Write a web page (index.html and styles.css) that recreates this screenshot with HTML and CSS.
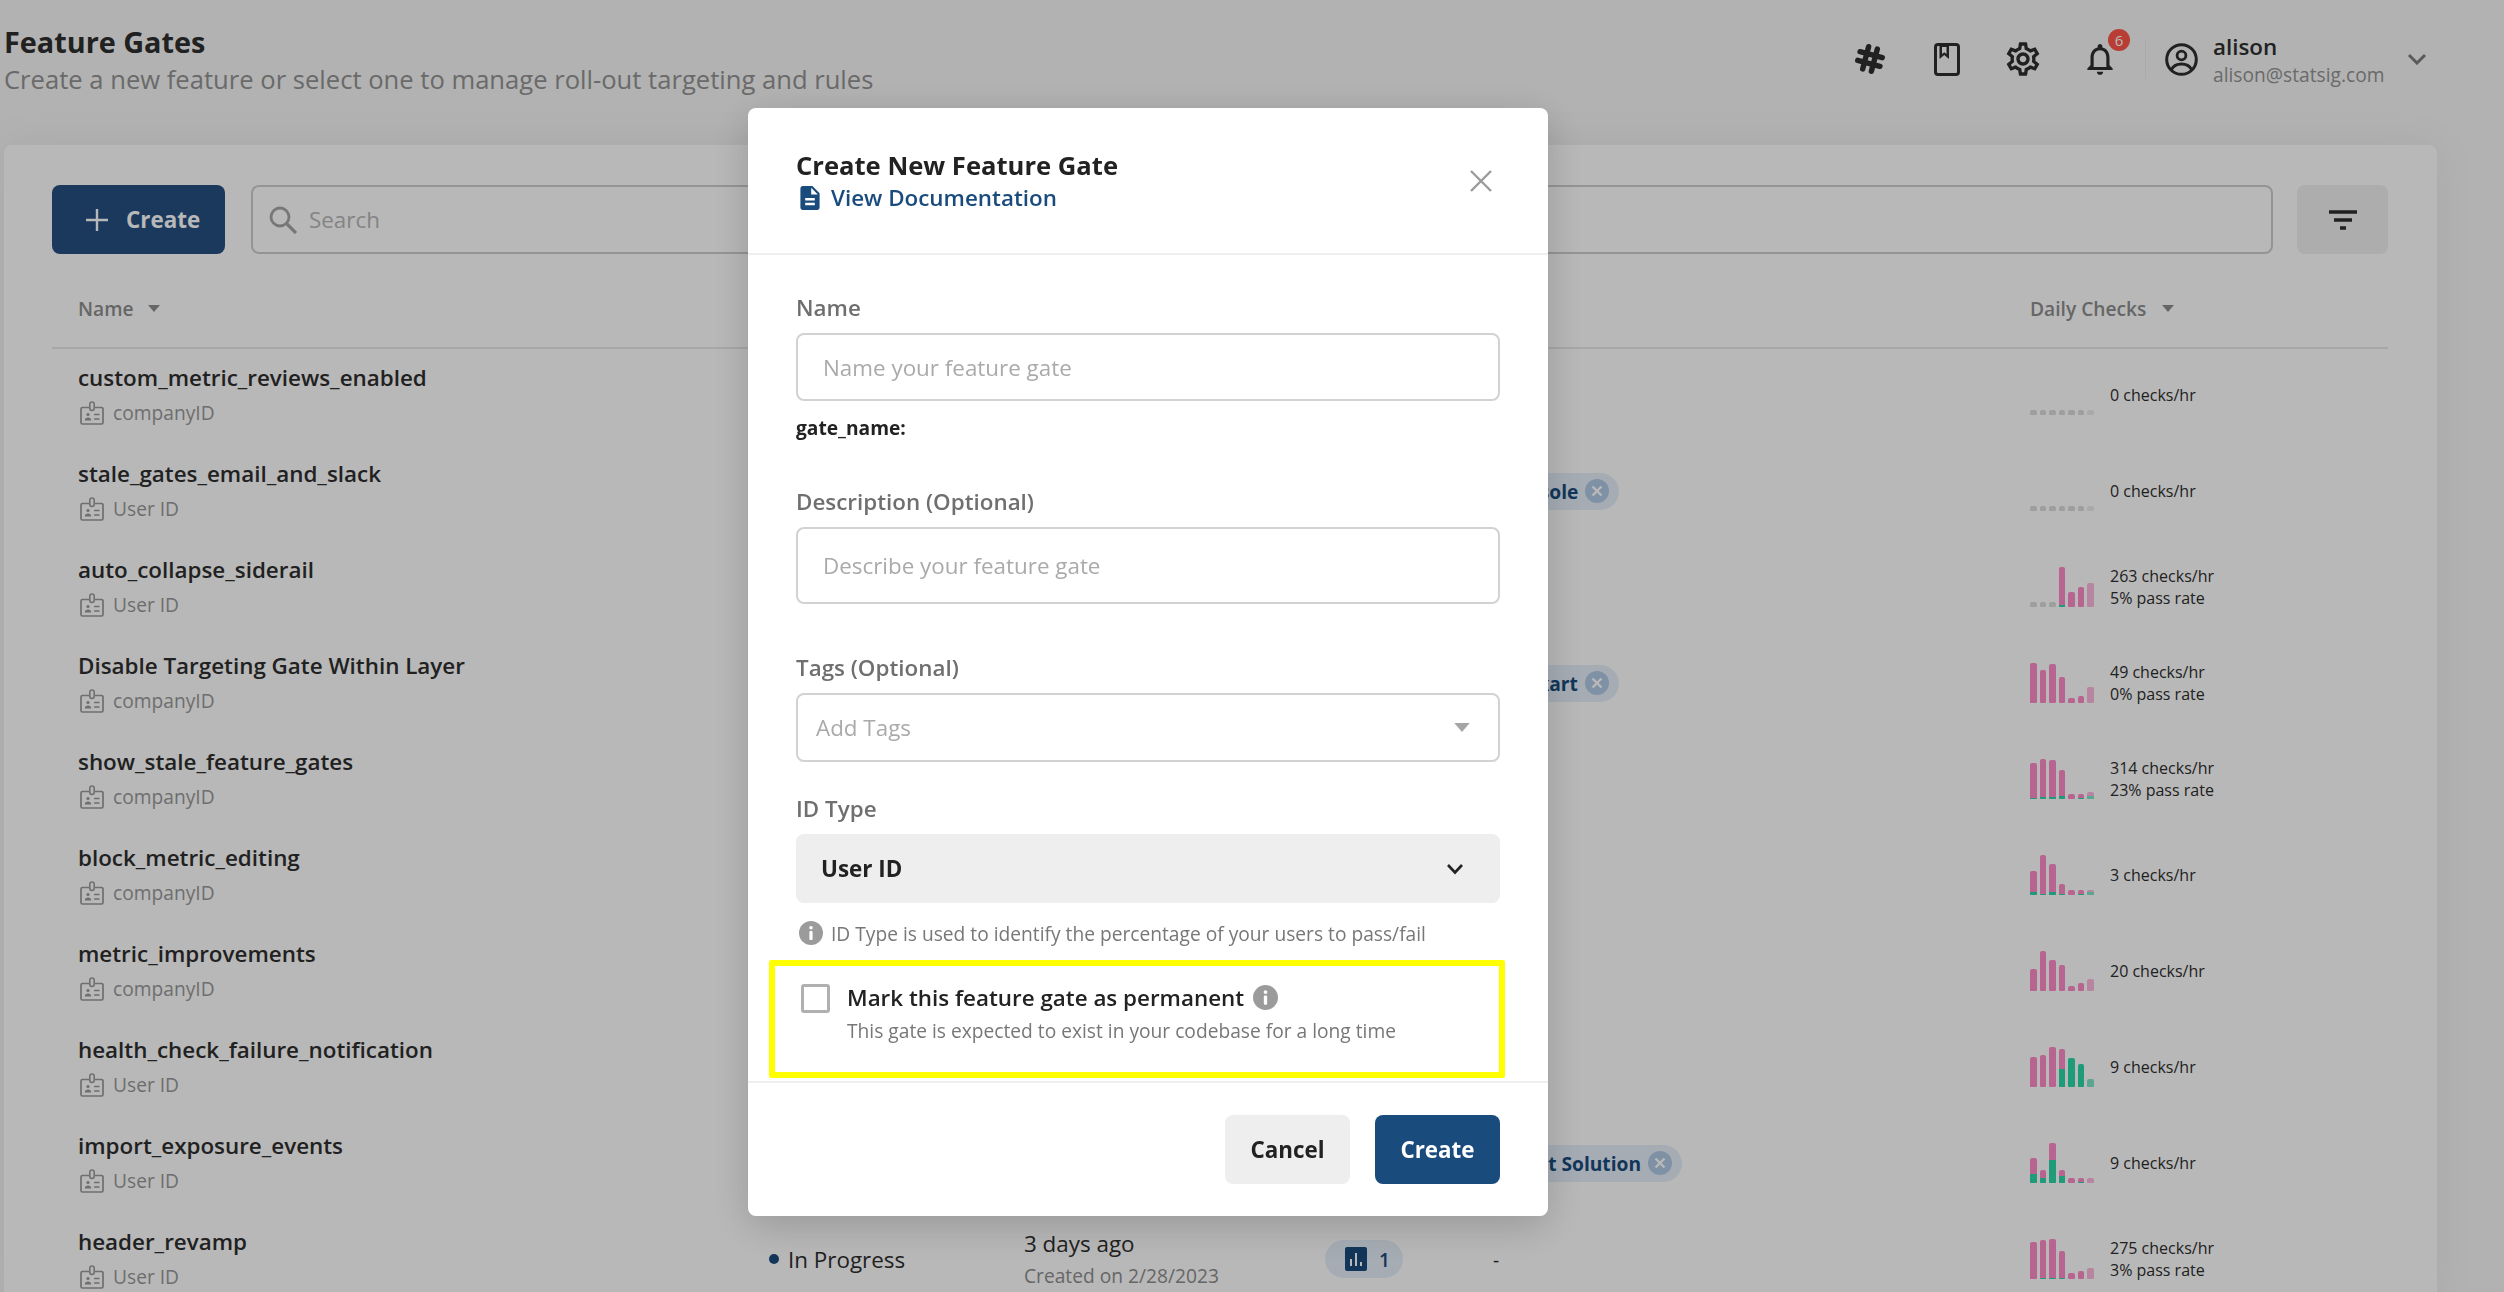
FILE: index.html
```html
<!DOCTYPE html>
<html lang="en">
<head>
<meta charset="utf-8">
<title>Feature Gates</title>
<link rel="stylesheet" href="styles.css">
</head>
<body>
<svg class="defs" width="0" height="0" aria-hidden="true">
  <symbol id="badge" viewBox="0 0 24 24">
    <path d="M9.5 6.5H2.6a1.6 1.6 0 0 0-1.6 1.6v13.3A1.6 1.6 0 0 0 2.6 23h18.8a1.6 1.6 0 0 0 1.6-1.6V8.100a1.600 1.600 0 0 0-1.600-1.600h-6.900" fill="none" stroke="currentColor" stroke-width="1.700"/>
    <rect x="9.800" y="1" width="4.400" height="8.500" rx="2.200" fill="none" stroke="currentColor" stroke-width="1.600"/>
    <circle cx="8" cy="13.500" r="1.600" fill="currentColor"/>
    <path d="M4.800 19.500c0-2.200 1.400-3 3.200-3s3.200.8 3.200 3z" fill="currentColor"/>
    <path d="M14 13.500h5.500M14 18h5.500" stroke="currentColor" stroke-width="1.600"/>
  </symbol>
  <symbol id="caret" viewBox="0 0 12 7"><path d="M0 0h12L6 7z" fill="currentColor"/></symbol>
  <symbol id="info" viewBox="0 0 24 24">
    <circle cx="12" cy="12" r="12" fill="currentColor"/>
    <circle cx="12" cy="6.800" r="1.800" fill="#fff"/>
    <rect x="10.400" y="10" width="3.200" height="9" rx="1" fill="#fff"/>
  </symbol>
  <symbol id="clear" viewBox="0 0 24 24">
    <circle cx="12" cy="12" r="12" fill="#b0c9e5"/>
    <path d="M7.500 7.500l9 9M16.500 7.500l-9 9" stroke="#fff" stroke-width="2.400"/>
  </symbol>
</svg>

<div class="page">
  <header class="topbar">
    <div class="heading">
      <h1 class="title">Feature Gates</h1>
      <p class="subtitle">Create a new feature or select one to manage roll-out targeting and rules</p>
    </div>
    <div class="account">
      <svg class="icon-slack" viewBox="0 0 32 32"><g transform="rotate(15 16 16)" stroke="#2e2e2e" stroke-width="5.400" stroke-linecap="round"><path d="M11.500 4.500v23M20.500 4.500v23M4.500 11.500h23M4.500 20.500h23"/></g></svg>
      <svg class="icon-book" viewBox="0 0 26 33"><rect x="1.500" y="1.500" width="23" height="30" rx="2.500" fill="none" stroke="#2e2e2e" stroke-width="3"/><path d="M5.500 2.500h9.500v13.500l-4.750-4-4.750 4z" fill="#2e2e2e"/><path d="M8 4h4.500v7l-2.250-1.800L8 11z" fill="#fff"/></svg>
      <svg class="icon-gear" viewBox="0 0 24 24"><path fill="#2e2e2e" d="M19.430 12.980c.04-.32.07-.64.07-.98 0-.34-.03-.66-.07-.98l2.110-1.650c.19-.15.24-.42.12-.64l-2-3.460c-.09-.16-.26-.25-.44-.25-.06 0-.12.01-.17.03l-2.490 1c-.52-.4-1.080-.73-1.690-.98l-.38-2.650C14.460 2.180 14.250 2 14 2h-4c-.25 0-.46.18-.49.42l-.38 2.650c-.61.25-1.170.59-1.690.98l-2.490-1c-.06-.02-.12-.03-.18-.03-.17 0-.34.09-.43.25l-2 3.460c-.13.22-.07.49.12.64l2.110 1.650c-.04.32-.07.65-.07.98 0 .33.03.66.07.98l-2.110 1.650c-.19.15-.24.42-.12.64l2 3.460c.09.16.26.25.44.25.06 0 .12-.01.17-.03l2.490-1c.52.4 1.080.73 1.690.98l.38 2.650c.03.24.24.42.49.42h4c.25 0 .46-.18.49-.42l.38-2.650c.61-.25 1.170-.59 1.690-.98l2.490 1c.06.02.12.03.18.03.17 0 .34-.09.43-.25l2-3.460c.12-.22.07-.49-.12-.64l-2.110-1.650zm-1.980-1.710c.04.31.05.52.05.73 0 .21-.02.43-.05.73l-.14 1.130.89.7 1.080.84-.7 1.210-1.270-.51-1.040-.42-.9.68c-.43.32-.84.56-1.250.73l-1.060.43-.16 1.130-.2 1.350h-1.400l-.19-1.350-.16-1.130-1.060-.43c-.43-.18-.83-.41-1.230-.71l-.91-.7-1.060.43-1.270.51-.7-1.210 1.080-.84.89-.7-.14-1.130c-.03-.31-.05-.54-.05-.74s.02-.43.05-.73l.14-1.130-.89-.7-1.080-.84.7-1.210 1.270.51 1.040.42.9-.68c.43-.32.84-.56 1.250-.73l1.060-.43.16-1.130.2-1.350h1.390l.19 1.350.16 1.130 1.060.43c.43.18.83.41 1.230.71l.91.7 1.060-.43 1.270-.51.7 1.210-1.070.85-.89.7.14 1.130zM12 8c-2.210 0-4 1.790-4 4s1.790 4 4 4 4-1.790 4-4-1.790-4-4-4zm0 6c-1.100 0-2-.9-2-2s.9-2 2-2 2 .9 2 2-.9 2-2 2z"/></svg>
      <div class="bell">
        <svg class="icon-bell" viewBox="0 0 24 24"><path fill="#2e2e2e" d="M12 22c1.100 0 2-.9 2-2h-4c0 1.100.9 2 2 2zm6-6v-5c0-3.070-1.630-5.640-4.500-6.320V4c0-.83-.67-1.500-1.500-1.500s-1.500.67-1.500 1.500v.68C7.640 5.360 6 7.920 6 11v5l-2 2v1h16v-1l-2-2zm-2 1H8v-6c0-2.480 1.510-4.500 4-4.500s4 2.020 4 4.500v6z"/></svg>
        <span class="badge">6</span>
      </div>
      <span class="sep"></span>
      <svg class="icon-user" viewBox="0 0 33 33"><circle cx="16.500" cy="16.500" r="14.800" fill="none" stroke="#2e2e2e" stroke-width="3"/><circle cx="16.500" cy="12.500" r="4.400" fill="none" stroke="#2e2e2e" stroke-width="2.800"/><path d="M6.500 26.500c2-4 6-5.500 10-5.500s8 1.500 10 5.500" fill="none" stroke="#2e2e2e" stroke-width="2.800"/></svg>
      <div class="who">
        <div class="who-name">alison</div>
        <div class="who-mail">alison@statsig.com</div>
      </div>
      <svg class="icon-chev" viewBox="0 0 20 12"><path d="M2 2l8 8 8-8" fill="none" stroke="#7d7d7d" stroke-width="3"/></svg>
    </div>
  </header>

  <main class="panel">
    <div class="toolbar">
      <button class="btn-new" type="button"><svg class="icon-plus" viewBox="0 0 22 22"><path d="M11 0v22M0 11h22" stroke="#fff" stroke-width="2.400"/></svg>Create</button>
      <div class="search">
        <svg class="icon-search" viewBox="0 0 28 28"><circle cx="11" cy="11" r="9" fill="none" stroke="#a6a6a6" stroke-width="2.800"/><path d="M17.500 17.500L27 27" stroke="#a6a6a6" stroke-width="3.200"/></svg>
        <span class="search-text">Search</span>
      </div>
      <button class="btn-filter" type="button" aria-label="Filter"><svg class="icon-filter" viewBox="0 0 28 20"><path d="M0 2h28M5 10h18M11 18h6" stroke="#2e2e2e" stroke-width="3.400"/></svg></button>
    </div>

    <div class="row head">
      <div class="th name-col">Name <svg class="caret"><use href="#caret"/></svg></div>
      <div class="th checks-col">Daily Checks <svg class="caret"><use href="#caret"/></svg></div>
    </div>

    <div class="row">
      <div class="name-col"><div class="gate">custom_metric_reviews_enabled</div><div class="idtype"><svg class="icon-badge"><use href="#badge"/></svg>companyID</div></div>
      <div class="checks-col"><div class="bars"><span class="bar idle"></span><span class="bar idle"></span><span class="bar idle"></span><span class="bar idle"></span><span class="bar idle"></span><span class="bar idle"></span><span class="bar idle"></span></div><div class="stats">0 checks/hr</div></div>
    </div>

    <div class="row">
      <div class="name-col"><div class="gate">stale_gates_email_and_slack</div><div class="idtype"><svg class="icon-badge"><use href="#badge"/></svg>User ID</div></div>
      <div class="tags-col"><span class="chip">Console<svg class="icon-clear"><use href="#clear"/></svg></span></div>
      <div class="checks-col"><div class="bars"><span class="bar idle"></span><span class="bar idle"></span><span class="bar idle"></span><span class="bar idle"></span><span class="bar idle"></span><span class="bar idle"></span><span class="bar idle"></span></div><div class="stats">0 checks/hr</div></div>
    </div>

    <div class="row">
      <div class="name-col"><div class="gate">auto_collapse_siderail</div><div class="idtype"><svg class="icon-badge"><use href="#badge"/></svg>User ID</div></div>
      <div class="checks-col"><div class="bars"><span class="bar idle"></span><span class="bar idle"></span><span class="bar idle"></span><span class="bar" style="height:40px"><i style="height:2px"></i></span><span class="bar" style="height:15px"></span><span class="bar" style="height:20px"></span><span class="bar" style="height:24px"></span></div><div class="stats">263 checks/hr<br>5% pass rate</div></div>
    </div>

    <div class="row">
      <div class="name-col"><div class="gate">Disable Targeting Gate Within Layer</div><div class="idtype"><svg class="icon-badge"><use href="#badge"/></svg>companyID</div></div>
      <div class="tags-col"><span class="chip">Flipkart<svg class="icon-clear"><use href="#clear"/></svg></span></div>
      <div class="checks-col"><div class="bars"><span class="bar" style="height:40px"></span><span class="bar" style="height:33px"></span><span class="bar" style="height:39px"></span><span class="bar" style="height:26px"></span><span class="bar" style="height:5px"></span><span class="bar" style="height:7px"></span><span class="bar" style="height:16px"></span></div><div class="stats">49 checks/hr<br>0% pass rate</div></div>
    </div>

    <div class="row">
      <div class="name-col"><div class="gate">show_stale_feature_gates</div><div class="idtype"><svg class="icon-badge"><use href="#badge"/></svg>companyID</div></div>
      <div class="checks-col"><div class="bars"><span class="bar" style="height:36px"><i style="height:1px"></i></span><span class="bar" style="height:40px"><i style="height:2px"></i></span><span class="bar" style="height:39px"><i style="height:2px"></i></span><span class="bar" style="height:29px"><i style="height:3px"></i></span><span class="bar" style="height:5px"></span><span class="bar" style="height:5px"><i style="height:1px"></i></span><span class="bar" style="height:7px"><i style="height:3px"></i></span></div><div class="stats">314 checks/hr<br>23% pass rate</div></div>
    </div>

    <div class="row">
      <div class="name-col"><div class="gate">block_metric_editing</div><div class="idtype"><svg class="icon-badge"><use href="#badge"/></svg>companyID</div></div>
      <div class="checks-col"><div class="bars"><span class="bar" style="height:24px"><i style="height:3px"></i></span><span class="bar" style="height:40px"><i style="height:1px"></i></span><span class="bar" style="height:31px"><i style="height:3px"></i></span><span class="bar" style="height:11px"><i style="height:1px"></i></span><span class="bar" style="height:5px"></span><span class="bar" style="height:5px"><i style="height:1px"></i></span><span class="bar" style="height:5px"><i style="height:3px"></i></span></div><div class="stats">3 checks/hr</div></div>
    </div>

    <div class="row">
      <div class="name-col"><div class="gate">metric_improvements</div><div class="idtype"><svg class="icon-badge"><use href="#badge"/></svg>companyID</div></div>
      <div class="checks-col"><div class="bars"><span class="bar" style="height:22px"></span><span class="bar" style="height:40px"></span><span class="bar" style="height:31px"></span><span class="bar" style="height:26px"></span><span class="bar" style="height:5px"></span><span class="bar" style="height:8px"></span><span class="bar" style="height:12px"></span></div><div class="stats">20 checks/hr</div></div>
    </div>

    <div class="row">
      <div class="name-col"><div class="gate">health_check_failure_notification</div><div class="idtype"><svg class="icon-badge"><use href="#badge"/></svg>User ID</div></div>
      <div class="checks-col"><div class="bars"><span class="bar" style="height:30px"></span><span class="bar" style="height:32px"></span><span class="bar" style="height:40px"></span><span class="bar" style="height:38px"><i style="height:18px"></i></span><span class="bar" style="height:29px"><i style="height:29px"></i></span><span class="bar" style="height:23px"><i style="height:23px"></i></span><span class="bar" style="height:8px"><i style="height:8px"></i></span></div><div class="stats">9 checks/hr</div></div>
    </div>

    <div class="row">
      <div class="name-col"><div class="gate">import_exposure_events</div><div class="idtype"><svg class="icon-badge"><use href="#badge"/></svg>User ID</div></div>
      <div class="tags-col"><span class="chip">Chart Solution<svg class="icon-clear"><use href="#clear"/></svg></span></div>
      <div class="checks-col"><div class="bars"><span class="bar" style="height:25px"><i style="height:9px"></i></span><span class="bar" style="height:13px"><i style="height:5px"></i></span><span class="bar" style="height:40px"><i style="height:23px"></i></span><span class="bar" style="height:13px"><i style="height:7px"></i></span><span class="bar" style="height:5px"></span><span class="bar" style="height:5px"><i style="height:1px"></i></span><span class="bar" style="height:5px"></span></div><div class="stats">9 checks/hr</div></div>
    </div>

    <div class="row">
      <div class="name-col"><div class="gate">header_revamp</div><div class="idtype"><svg class="icon-badge"><use href="#badge"/></svg>User ID</div></div>
      <div class="status-col"><span class="dot"></span>In Progress</div>
      <div class="date-col"><div class="date">3 days ago</div><div class="created">Created on 2/28/2023</div></div>
      <div class="metric-col"><span class="metric-chip"><svg class="icon-metric" viewBox="0 0 22 24"><rect width="22" height="24" rx="2" fill="#194b7d"/><path d="M6 12v7M11 6v13M16 15v4" stroke="#fff" stroke-width="2"/></svg>1</span></div>
      <div class="tags-col plain">-</div>
      <div class="checks-col"><div class="bars"><span class="bar" style="height:37px"></span><span class="bar" style="height:39px"><i style="height:1px"></i></span><span class="bar" style="height:40px"><i style="height:1px"></i></span><span class="bar" style="height:28px"><i style="height:1px"></i></span><span class="bar" style="height:6px"></span><span class="bar" style="height:8px"></span><span class="bar" style="height:11px"></span></div><div class="stats">275 checks/hr<br>3% pass rate</div></div>
    </div>
  </main>
</div>

<div class="overlay">
  <section class="modal">
    <div class="modal-head">
      <div>
        <h2 class="modal-title">Create New Feature Gate</h2>
        <a class="doc-link" href="#"><svg class="icon-doc" viewBox="4 2 16 20"><path fill="#194b7d" d="M14 2H6c-1.100 0-1.990.9-1.990 2L4 20c0 1.100.89 2 1.990 2H18c1.100 0 2-.9 2-2V8l-6-6zm2 16H8v-2h8v2zm0-4H8v-2h8v2zm-3-5V3.500L18.500 9H13z"/></svg>View Documentation</a>
      </div>
      <svg class="icon-close" viewBox="0 0 22 22"><path d="M1 1l20 20M21 1L1 21" stroke="#9b9b9b" stroke-width="2.400"/></svg>
    </div>
    <div class="modal-body">
      <label class="label">Name</label>
      <div class="field field-name">Name your feature gate</div>
      <div class="slug">gate_name:</div>
      <label class="label label-desc">Description (Optional)</label>
      <div class="field field-desc">Describe your feature gate</div>
      <label class="label label-tags">Tags (Optional)</label>
      <div class="field field-tags">Add Tags<svg class="caret caret-tags"><use href="#caret"/></svg></div>
      <label class="label label-id">ID Type</label>
      <div class="select">User ID<svg class="icon-select-chev" viewBox="0 0 18 12"><path d="M2 2l7 7.500L16 2" fill="none" stroke="#222" stroke-width="2.600"/></svg></div>
      <div class="hint"><svg class="icon-info"><use href="#info"/></svg>ID Type is used to identify the percentage of your users to pass/fail</div>
      <div class="permanent">
        <span class="checkbox"></span>
        <div>
          <div class="perm-title">Mark this feature gate as permanent<svg class="icon-info perm-info"><use href="#info"/></svg></div>
          <div class="perm-sub">This gate is expected to exist in your codebase for a long time</div>
        </div>
        <span class="highlight"></span>
      </div>
    </div>
    <div class="modal-foot">
      <button class="btn btn-cancel" type="button">Cancel</button>
      <button class="btn btn-create" type="button">Create</button>
    </div>
  </section>
</div>
</body>
</html>
```
FILE: styles.css
```css
* { box-sizing: border-box; }
html, body { margin: 0; height: 100%; }
body {
  background: #f7f7f7;
  color: #2e2e2e;
  font-family: "Open Sans", "Noto Sans", sans-serif;
  overflow: hidden;
}
.defs { position: absolute; }
svg { display: block; flex: none; }
button { font-family: inherit; border: 0; }

.page { height: 1292px; overflow: hidden; }

/* top bar */
.topbar { height: 145px; display: flex; justify-content: space-between; align-items: flex-start; padding-left: 4px; }
.title { margin: 24px 0 0; font-size: 28.8px; line-height: 36px; font-weight: 700; }
.subtitle { margin: 3px 0 0; font-size: 25.6px; line-height: 34px; font-weight: 400; color: #939393; }

.account { display: flex; align-items: center; height: 80px; margin-top: 19px; width: 650px; }
.icon-slack { width: 32px; height: 32px; }
.icon-book { width: 26px; height: 33px; margin-left: 48px; }
.icon-gear { width: 40px; height: 40px; margin-left: 43px; }
.bell { position: relative; width: 38px; height: 38px; margin-left: 38px; }
.icon-bell { width: 38px; height: 38px; }
.badge {
  position: absolute; left: 27px; top: -11px; width: 22px; height: 22px; border-radius: 50%;
  background: #ff5548; color: #fff; font-size: 15px; line-height: 22px; text-align: center;
}
.sep { width: 1px; height: 40px; background: #ececec; margin-left: 26px; }
.icon-user { width: 33px; height: 33px; margin-left: 19px; }
.who { margin: 3px 0 0 15px; }
.who-name { font-size: 22.4px; line-height: 28px; font-weight: 600; }
.who-mail { font-size: 19.2px; line-height: 28px; color: #939393; }
.icon-chev { width: 20px; height: 12px; margin-left: 23px; }

/* panel */
.panel {
  margin-left: 4px; width: 2433px; height: 1160px; background: #fff; border-radius: 8px;
  padding: 40px 49px 0 48px; box-shadow: 0 0 40px rgba(60, 70, 90, 0.08);
}
.toolbar { display: flex; height: 69px; }
.btn-new {
  width: 173px; height: 69px; background: #245082; color: #fff; border-radius: 8px;
  display: flex; align-items: center; gap: 18px; padding: 0 0 0 34px;
  font-size: 22.4px; font-weight: 700;
}
.icon-plus { width: 22px; height: 22px; }
.search {
  flex: 1; margin: 0 24px 0 26px; border: 2px solid #cecece; border-radius: 8px;
  display: flex; align-items: center; padding-left: 16px;
}
.icon-search { width: 28px; height: 28px; }
.search-text { margin-left: 12px; font-size: 22.4px; color: #b8b8b8; }
.btn-filter { width: 91px; height: 69px; background: #f0f0f0; border-radius: 8px; display: flex; align-items: center; justify-content: center; }
.icon-filter { width: 28px; height: 20px; }

/* table */
.row { height: 96px; position: relative; display: flex; align-items: center; }
.row.head { height: 95px; padding-top: 16px; margin-bottom: -2px; border-bottom: 2px solid #e8e8e8; }
.name-col { padding-left: 26px; padding-bottom: 1px; width: 715px; flex: none; }
.th { display: flex; align-items: center; gap: 14px; font-size: 19.2px; font-weight: 600; color: #8e8e8e; }
.head .name-col { padding-bottom: 0; }
.caret { width: 12px; height: 7px; }
.checks-col { position: absolute; left: 1978px; top: 0; bottom: 0; display: flex; align-items: center; }
.head .checks-col { top: 16px; gap: 16px; }
.gate { font-size: 22.4px; line-height: 30px; font-weight: 600; }
.idtype { display: flex; align-items: center; margin-top: 7px; font-size: 19.2px; line-height: 26px; color: #999; padding-left: 2px; }
.icon-badge { width: 24px; height: 24px; margin-right: 9px; color: #9a9a9a; }

.bars { display: flex; align-items: flex-end; gap: 3px; width: 64px; height: 40px; }
.bar {
  flex: 1; height: 5px; background: #ff8bc9; border-radius: 2px 2px 1px 1px; overflow: hidden;
  display: flex; align-items: flex-end;
}
.bar.idle { background: #dcdcdc; }
.bar:last-child { opacity: 0.6; }
.bar i { display: block; width: 100%; background: #2ad7a7; }
.stats { margin-left: 16px; font-size: 16px; line-height: 22px; color: #2e2e2e; }

.status-col { position: absolute; left: 717px; display: flex; align-items: center; font-size: 22.4px; }
.dot { width: 10px; height: 10px; border-radius: 50%; background: #194b7d; margin-right: 9px; }
.date-col { position: absolute; left: 972px; }
.date { font-size: 22.4px; line-height: 30px; }
.created { font-size: 19.2px; line-height: 26px; margin-top: 4px; color: #8e8e8e; }
.metric-col { position: absolute; left: 1273px; }
.metric-chip {
  width: 78px; height: 38px; border-radius: 19px; background: #e6effa; color: #194b7d;
  display: flex; align-items: center; gap: 12px; padding-left: 20px; font-size: 19.2px; font-weight: 600;
}
.icon-metric { width: 22px; height: 24px; }
.tags-col { position: absolute; left: 1435px; }
.tags-col.plain { left: 1441px; font-size: 19.2px; }
.chip {
  display: flex; align-items: center; height: 37px; border-radius: 19px; background: #e6effa;
  color: #194b7d; font-size: 19.2px; font-weight: 700; padding: 0 10px 0 16px;
}
.icon-clear { width: 24px; height: 24px; margin-left: 7px; }

/* modal */
.overlay { position: fixed; inset: 0; background: rgba(0, 0, 0, 0.28); padding: 108px 0 0 748px; }
.modal {
  width: 800px; height: 1108px; background: #fff; border-radius: 8px; display: flex; flex-direction: column;
  box-shadow: 0 10px 40px rgba(0, 0, 0, 0.18);
}
.modal-head {
  height: 147px; flex: none; border-bottom: 2px solid #efefef; padding: 40px 48px 0; display: flex; justify-content: space-between;
}
.modal-title { margin: 0; font-size: 25.6px; line-height: 36px; font-weight: 700; color: #222; }
.doc-link { display: flex; align-items: center; gap: 11px; margin-top: -2px; padding-left: 4px; font-size: 22.4px; line-height: 32px; font-weight: 600; color: #194b7d; text-decoration: none; }
.icon-doc { width: 20px; height: 24px; }
.icon-close { width: 22px; height: 22px; margin: 22px 8px 0 0; }

.modal-body { flex: 1; padding: 38px 48px 0; }
.label { display: block; font-size: 22.4px; line-height: 30px; color: #6f6f6f; font-weight: 600; }
.field {
  display: flex; align-items: center; margin-top: 10px; border: 2px solid #d2d2d2; border-radius: 8px;
  padding-left: 25px; font-size: 22.4px; color: #aaa;
}
.field-name { height: 68px; }
.slug { margin-top: 14px; font-size: 19.2px; line-height: 26px; font-weight: 700; color: #222; }
.label-desc { margin-top: 46px; }
.field-desc { height: 77px; }
.label-tags { margin-top: 49px; }
.field-tags { height: 69px; padding-left: 18px; justify-content: space-between; padding-right: 28px; }
.caret-tags { width: 16px; height: 9px; color: #a5a5a5; }
.label-id { margin-top: 32px; }
.select {
  display: flex; align-items: center; justify-content: space-between; margin-top: 10px; height: 69px;
  background: #eeeeee; border-radius: 8px; padding: 0 36px 0 25px; font-size: 22.4px; font-weight: 700; color: #222;
}
.icon-select-chev { width: 18px; height: 12px; }
.hint { display: flex; align-items: center; margin-top: 15px; height: 30px; padding-left: 3px; font-size: 19.2px; color: #777; }
.icon-info { width: 24px; height: 24px; color: #9b9b9b; margin-right: 8px; }
.permanent { position: relative; display: flex; margin-top: 36px; padding-left: 5px; }
.checkbox { width: 29px; height: 29px; flex: none; border: 3px solid #b0b0b0; border-radius: 3px; margin-right: 17px; }
.perm-title { display: flex; align-items: center; height: 28px; margin-top: -1px; font-size: 22.4px; font-weight: 600; color: #222; }
.perm-info { width: 25px; height: 25px; margin: 0 0 0 9px; }
.perm-sub { margin-top: 6px; font-size: 19.2px; line-height: 28px; color: #777; }
.highlight { position: absolute; left: -27px; top: -24px; width: 736px; height: 118px; border: 6px solid #ffff00; border-radius: 2px; }

.modal-foot { flex: none; height: 135px; border-top: 2px solid #efefef; display: flex; justify-content: flex-end; gap: 25px; padding: 32px 48px 0 0; }
.btn { width: 125px; height: 69px; border-radius: 8px; font-size: 22.4px; font-weight: 700; }
.btn-cancel { background: #eeeeee; color: #222; }
.btn-create { background: #194b7d; color: #fff; }
```
